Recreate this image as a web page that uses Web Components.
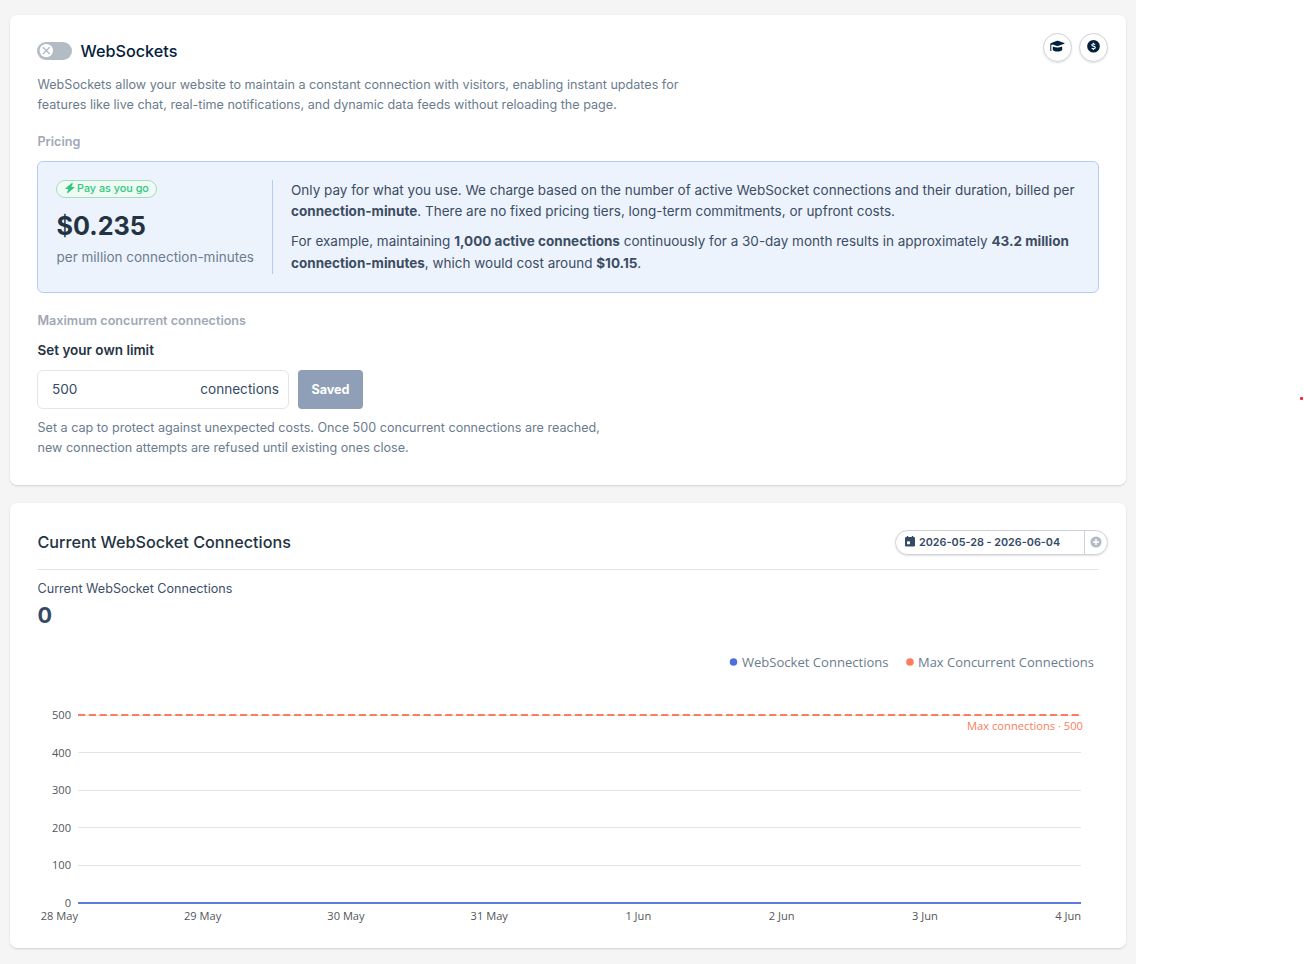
<!DOCTYPE html>
<html lang="en">
<head>
<meta charset="utf-8">
<title>WebSockets</title>
<style>
  body {
    margin: 0;
    background: #fff;
    font-family: Inter, "Liberation Sans", sans-serif;
    color: #243342;
  }
</style>
</head>
<body>
<ws-page>
  <ws-card style="--card-height: 470px">
    <ws-settings></ws-settings>
  </ws-card>
  <ws-card style="--card-height: 445px">
    <ws-stats title="Current WebSocket Connections" value="0" range="2026-05-28 - 2026-06-04">
      <ws-chart max="500"></ws-chart>
    </ws-stats>
  </ws-card>
  <ws-dot slot="overlay"></ws-dot>
</ws-page>

<script>
class WsPage extends HTMLElement {
  connectedCallback() {
    let shadowRoot = this.attachShadow({mode: 'open'});

    shadowRoot.innerHTML = `
      <style>
        :host {
          display: block;
          height: 964px;
          overflow: hidden;
          position: relative;
        }
        main {
          box-sizing: border-box;
          width: 1136px;
          height: 964px;
          padding: 15px 10px;
          background: #f5f5f5;
          display: flex;
          flex-direction: column;
          gap: 18px;
        }
      </style>
      <main><slot></slot></main>
      <slot name="overlay"></slot>
    `;
  }
}

class WsCard extends HTMLElement {
  connectedCallback() {
    let shadowRoot = this.attachShadow({mode: 'open'});

    shadowRoot.innerHTML = `
      <style>
        :host {
          display: block;
          box-sizing: border-box;
          height: var(--card-height);
          flex: none;
          padding: 18px 18px 0 27px;
          background: #fff;
          border-radius: 7px;
          box-shadow: 0 1px 2px rgba(0, 0, 0, .15);
        }
      </style>
      <slot></slot>
    `;
  }
}

class WsToggle extends HTMLElement {
  connectedCallback() {
    let shadowRoot = this.attachShadow({mode: 'open'});

    shadowRoot.innerHTML = `
      <style>
        :host { display: block; width: 35px; height: 18px; }
        svg { display: block; }
      </style>
      <svg width="35" height="18" viewBox="0 0 35 18">
        <rect width="35" height="18" rx="9" fill="#b3bbc4"/>
        <circle cx="9.3" cy="8.6" r="6.7" fill="#fff"/>
        <path d="M5.9 5.2l6.8 6.8M12.7 5.2l-6.8 6.8" stroke="#b3bbc4" stroke-width="1.4"/>
      </svg>
    `;
  }
}

class WsRoundButton extends HTMLElement {
  connectedCallback() {
    let shadowRoot = this.attachShadow({mode: 'open'});

    shadowRoot.innerHTML = `
      <style>
        :host {
          display: flex;
          box-sizing: border-box;
          width: 29px;
          height: 29px;
          justify-content: center;
          padding-top: 6px;
          border: 1px solid #cdd1d8;
          border-radius: 50%;
          box-shadow: 0 1px 2px rgba(0, 0, 0, .12);
        }
      </style>
      <slot></slot>
    `;
  }
}

class WsPricing extends HTMLElement {
  connectedCallback() {
    let shadowRoot = this.attachShadow({mode: 'open'});

    shadowRoot.innerHTML = `
      <style>
        :host {
          display: flex;
          box-sizing: border-box;
          width: 1062px;
          height: 132px;
          padding: 18px;
          background: #edf3fd;
          border: 1px solid #b4cbf8;
          border-radius: 6px;
        }
        .price {
          box-sizing: border-box;
          width: 217px;
          height: 94px;
          border-right: 1px solid #b4cbf8;
        }
        .badge {
          display: inline-flex;
          box-sizing: border-box;
          width: 101px;
          height: 18px;
          align-items: flex-start;
          gap: 2.5px;
          padding-left: 7.5px;
          border: 1px solid #a3dfbb;
          border-radius: 9px;
          background: #f0faf4;
          color: #2fc780;
          font-size: 10.8px;
          line-height: 15px;
          font-weight: 500;
          white-space: nowrap;
        }
        .badge svg { flex: none; margin-top: 2px; }
        .price > * { display: flex; }
        .amount {
          margin: 10px 0 0 .5px;
          font-size: 25.2px;
          line-height: 36px;
          font-weight: 700;
          color: #243342;
        }
        .unit {
          margin: 3px 0 0 .5px;
          font-size: 13.5px;
          line-height: 21px;
          color: #6b7c8e;
        }
        .copy {
          padding-left: 18px;
          font-size: 13.5px;
          line-height: 21.6px;
          color: #3b4d63;
          white-space: nowrap;
        }
        p { margin: -.4px 0 8.8px; }
        b { font-weight: 700; }
      </style>
      <div class="price">
        <div class="badge">
          <svg width="10" height="11" viewBox="0 0 10 11"><path d="M6.8.1L.5 5.3Q0 6 .8 6H3.400L2 9.500Q2 10.300 2.900 10L9.300 4.700Q9.700 4 9 4H6.400L7.800.8Q7.900 0 6.800.1z" fill="currentColor"/></svg>
          <span>Pay as you go</span>
        </div>
        <div class="amount">$0.235</div>
        <div class="unit">per million connection-minutes</div>
      </div>
      <div class="copy">
        <p>Only pay for what you use. We charge based on the number of active WebSocket connections and their duration, billed per<br><b>connection-minute</b>. There are no fixed pricing tiers, long-term commitments, or upfront costs.</p>
        <p>For example, maintaining <b>1,000 active connections</b> continuously for a 30-day month results in approximately <b>43.2 million<br>connection-minutes</b>, which would cost around <b>$10.15</b>.</p>
      </div>
    `;
  }
}

class WsLimit extends HTMLElement {
  connectedCallback() {
    let shadowRoot = this.attachShadow({mode: 'open'});

    shadowRoot.innerHTML = `
      <style>
        :host { display: flex; gap: 9px; height: 39px; }
        .field {
          display: flex;
          box-sizing: border-box;
          width: 252px;
          align-items: center;
          justify-content: space-between;
          padding: 0 9px 1.5px 14px;
          border: 1px solid #e3e5e8;
          border-radius: 6px;
          font-size: 13.6px;
          color: #344b66;
        }
        button {
          width: 65px;
          padding: 0;
          border: 0;
          border-radius: 4px;
          background: #8e9fb7;
          color: #fff;
          font: 700 12.6px Inter, sans-serif;
        }
      </style>
      <div class="field"><span>${this.getAttribute('value')}</span><span>connections</span></div>
      <button>Saved</button>
    `;
  }
}

class WsSettings extends HTMLElement {
  connectedCallback() {
    let shadowRoot = this.attachShadow({mode: 'open'});

    shadowRoot.innerHTML = `
      <style>
        :host { display: block; }
        header { display: flex; height: 36px; }
        .name { display: flex; align-items: center; gap: 8.6px; flex: 1; height: 36px; }
        h1 { margin: 0; font-size: 16.2px; font-weight: 500; color: #04203d; }
        .actions { display: flex; gap: 7px; }
        p {
          margin: 0 0 0 .5px;
          font-size: 12.6px;
          line-height: 20px;
          color: #6b7c8e;
          white-space: nowrap;
        }
        h2 {
          margin: 17px 0 9px .5px;
          font-size: 12.6px;
          line-height: 20px;
          font-weight: 600;
          color: #a0a8b4;
        }
        h2.limit { margin-top: 18px; }
        h3 {
          margin: 0 0 10px .5px;
          font-size: 13.5px;
          line-height: 20px;
          font-weight: 600;
          color: #243342;
        }
        .intro { margin-top: 6px; }
        .help { margin-top: 9px; }
      </style>
      <header>
        <div class="name"><ws-toggle></ws-toggle><h1>WebSockets</h1></div>
        <div class="actions">
          <ws-round-button>
            <svg width="15" height="13" viewBox="0 0 15 13" fill="#04203d">
              <path d="M7 .8Q7.500.6 8 .8L14.300 3Q14.900 3.400 14.300 3.800L8 6Q7.500 6.200 7 6L3.200 4.700L1.700 4.500Q1.300 5 1.300 6V11H.3V4.200Q.3 3.200 1.200 2.900z"/>
              <path d="M2.900 6.400Q7.500 8.700 12.100 6.400L12.300 9.600Q11.500 11.600 7.500 11.600Q3.500 11.600 2.700 9.600z"/>
            </svg>
          </ws-round-button>
          <ws-round-button>
            <svg width="13" height="13" viewBox="0 0 13 13">
              <circle cx="6.500" cy="6.300" r="6.300" fill="#04203d"/>
              <path d="M8.200 4.400Q4.900 3.300 4.800 5C4.800 6.300 8.300 6 8.300 7.500C8.200 9.100 6 8.900 4.700 8.200M6.500 2.700V4M6.500 8.600V10" fill="none" stroke="#fff" stroke-width="1.100"/>
            </svg>
          </ws-round-button>
        </div>
      </header>
      <p class="intro">WebSockets allow your website to maintain a constant connection with visitors, enabling instant updates for<br>features like live chat, real-time notifications, and dynamic data feeds without reloading the page.</p>
      <h2>Pricing</h2>
      <ws-pricing></ws-pricing>
      <h2 class="limit">Maximum concurrent connections</h2>
      <h3>Set your own limit</h3>
      <ws-limit value="500"></ws-limit>
      <p class="help">Set a cap to protect against unexpected costs. Once 500 concurrent connections are reached,<br>new connection attempts are refused until existing ones close.</p>
    `;
  }
}

class WsDateRange extends HTMLElement {
  connectedCallback() {
    let shadowRoot = this.attachShadow({mode: 'open'});

    shadowRoot.innerHTML = `
      <style>
        :host {
          display: flex;
          box-sizing: border-box;
          width: 213px;
          height: 25px;
          border: 1px solid #cdd1d8;
          border-radius: 13px;
          box-shadow: 0 1px 2px rgba(0, 0, 0, .12);
          font-size: 10.8px;
          font-weight: 600;
          color: #344b66;
          white-space: nowrap;
        }
        .range { display: flex; align-items: center; gap: 4px; width: 179px; padding-left: 9px; border-right: 1px solid #cdd1d8; }
        .range svg { margin-bottom: 2px; }
        .add { display: flex; align-items: center; padding-left: 4.5px; }
      </style>
      <div class="range">
        <svg width="10" height="11" viewBox="0 0 10 11"><path d="M2.500 0V2M7.500 0V2" stroke="currentColor" stroke-width="1.400"/><rect y="1" width="10" height="9.500" rx="1.200" fill="currentColor"/><rect x="2" y="5.300" width="3" height="3" rx=".4" fill="#fff"/></svg>
        <span>${this.getAttribute('value')}</span>
      </div>
      <div class="add"><svg width="12" height="12" viewBox="0 0 12 12"><circle cx="6" cy="6" r="5.600" fill="#b3bbc4"/><path d="M6 3V9M3 6H9" stroke="#fff" stroke-width="1.500"/></svg></div>
    `;
  }
}

class WsStats extends HTMLElement {
  connectedCallback() {
    let shadowRoot = this.attachShadow({mode: 'open'});
    let title = this.getAttribute('title');
    // keep the browser tooltip off the card
    this.removeAttribute('title');

    shadowRoot.innerHTML = `
      <style>
        :host { display: block; }
        header { display: flex; justify-content: space-between; align-items: center; height: 42px; }
        h1 { margin: 0 0 0 .5px; font-size: 16.2px; font-weight: 500; color: #243342; }
        hr { width: 1062px; height: 1px; margin: 6px 0 9px; border: 0; background: #e3e5e8; }
        .label { margin-left: .5px; font-size: 12.6px; line-height: 20px; color: #3b5069; }
        .value { margin-left: .5px; font-size: 21.6px; line-height: 32px; height: 33px; font-weight: 700; color: #344b66; }
      </style>
      <header>
        <h1>${title}</h1>
        <ws-date-range value="${this.getAttribute('range')}"></ws-date-range>
      </header>
      <hr>
      <div class="label">${title}</div>
      <div class="value">${this.getAttribute('value')}</div>
      <slot></slot>
    `;
  }
}

class WsChart extends HTMLElement {
  connectedCallback() {
    let shadowRoot = this.attachShadow({mode: 'open'});
    let max = Number(this.getAttribute('max'));
    let days = ['28 May', '29 May', '30 May', '31 May', '1 Jun', '2 Jun', '3 Jun', '4 Jun'];
    let rows = '';
    let labels = '';

    for (let v = 0; v <= max; v += 100) {
      let y = 270.5 - v / max * 187.5;
      rows += `<path d="M41 ${Math.floor(y) + .5}H1044" stroke="#e2e4e9" stroke-width="1.2"/>
        <text x="34" y="${y + 4}" text-anchor="end">${v}</text>`;
    }
    days.forEach((day, i) => {
      labels += `<text x="${41 + i * 143.3}" y="287.5" text-anchor="end">${day}</text>`;
    });

    shadowRoot.innerHTML = `
      <style>
        :host { display: block; }
        svg { display: block; }
        text { font: 11.1px "Open Sans", "Noto Sans", sans-serif; fill: #54555a; }
        .legend { font-size: 13.3px; fill: #6b7c8e; }
        .max { fill: #fc7d5b; }
      </style>
      <svg width="1071" height="310" viewBox="0 0 1071 310">
        <circle cx="696.5" cy="30" r="3.8" fill="#4f6fdc"/>
        <text class="legend" x="705" y="35" textLength="146.5" lengthAdjust="spacingAndGlyphs">WebSocket Connections</text>
        <circle cx="873" cy="30" r="3.8" fill="#fc7d5b"/>
        <text class="legend" x="881" y="35" textLength="176" lengthAdjust="spacingAndGlyphs">Max Concurrent Connections</text>
        ${rows}
        <path d="M41 83H1044" stroke="#fc7d5b" stroke-width="1.8" stroke-dasharray="7.2 3.6"/>
        <path d="M41 271H1044" stroke="#6079e2" stroke-width="2"/>
        ${labels}
        <text class="max" x="930" y="98" textLength="116" lengthAdjust="spacingAndGlyphs">Max connections · ${max}</text>
      </svg>
    `;
  }
}

// small marker to the right of the panel
class WsDot extends HTMLElement {
  connectedCallback() {
    let shadowRoot = this.attachShadow({mode: 'open'});

    shadowRoot.innerHTML = `
      <style>
        :host {
          display: block;
          position: absolute;
          left: 1300px;
          top: 397px;
          width: 3px;
          height: 3px;
          border-radius: 1px;
          background: #f02b2b;
        }
      </style>
    `;
  }
}

window.customElements.define('ws-toggle', WsToggle);
window.customElements.define('ws-round-button', WsRoundButton);
window.customElements.define('ws-pricing', WsPricing);
window.customElements.define('ws-limit', WsLimit);
window.customElements.define('ws-settings', WsSettings);
window.customElements.define('ws-date-range', WsDateRange);
window.customElements.define('ws-chart', WsChart);
window.customElements.define('ws-stats', WsStats);
window.customElements.define('ws-dot', WsDot);
window.customElements.define('ws-card', WsCard);
window.customElements.define('ws-page', WsPage);
</script>
</body>
</html>
